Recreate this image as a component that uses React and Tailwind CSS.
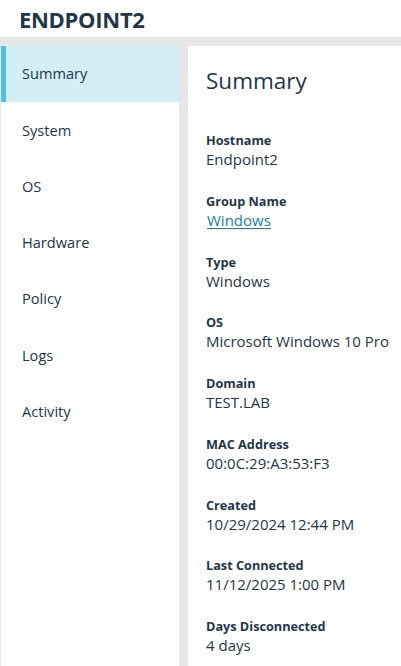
import React from "react";

const navItems = ["Summary", "System", "OS", "Hardware", "Policy", "Logs", "Activity"];

const fields = [
  { label: "Hostname", value: "Endpoint2" },
  { label: "Group Name", value: "Windows", link: true },
  { label: "Type", value: "Windows" },
  { label: "OS", value: "Microsoft Windows 10 Pro" },
  { label: "Domain", value: "TEST.LAB" },
  { label: "MAC Address", value: "00:0C:29:A3:53:F3" },
  { label: "Created", value: "10/29/2024 12:44 PM" },
  { label: "Last Connected", value: "11/12/2025 1:00 PM" },
  { label: "Days Disconnected", value: "4 days" },
];

export default function App() {
  return (
    <div
      className="w-[401px] h-[666px] overflow-hidden bg-[#e6e7e7] flex flex-col text-[#233648]"
      style={{ fontFamily: '"Open Sans", "Noto Sans", sans-serif' }}
    >
      <header className="h-[37px] bg-white pl-[19px] flex items-center shrink-0">
        <h1 className="text-[22px] font-bold tracking-[-0.3px] leading-none text-[#233648]">ENDPOINT2</h1>
      </header>
      <div className="mt-[9px] flex flex-1 min-h-0 pl-px">
        <nav className="w-[178px] bg-white shrink-0 flex flex-col">
          {navItems.map((item, i) => (
            <div
              key={item}
              className={
                "h-[56.3px] flex items-center text-[14.6px] text-[#233648] " +
                (i === 0 ? "bg-[#d3eff5] border-l-[5px] border-[#4fc3df] pl-[16px]" : "pl-[21px]")
              }
            >
              {item}
            </div>
          ))}
        </nav>
        <main className="ml-[9px] flex-1 bg-white pl-[18px] pt-[19px] overflow-hidden">
          <h2 className="text-[22.5px] leading-[32px] font-normal text-[#233648]">Summary</h2>
          <div className="mt-[35px] flex flex-col gap-[22.75px]">
            {fields.map((f) => (
              <div key={f.label} className="flex flex-col">
                <div className="text-[12.7px] font-bold leading-[16px] text-[#233648]">{f.label}</div>
                {f.link ? (
                  <a href="#" className="text-[15px] leading-[22px] text-[#1482a6] underline underline-offset-2 whitespace-nowrap pl-px">
                    {f.value}
                  </a>
                ) : (
                  <div className="text-[15px] leading-[22px] text-[#233648] whitespace-nowrap">{f.value}</div>
                )}
              </div>
            ))}
          </div>
        </main>
      </div>
    </div>
  );
}
